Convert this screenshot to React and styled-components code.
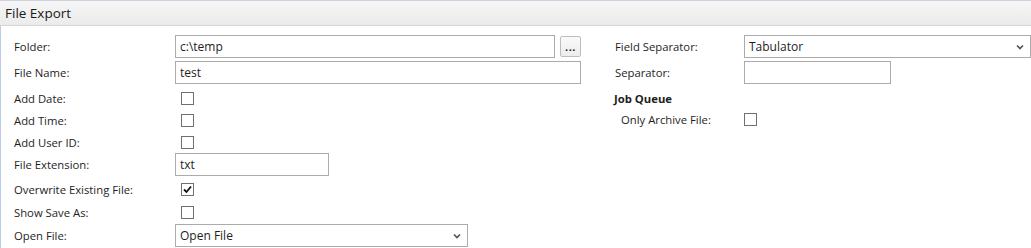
import React from 'react'
import styled, { createGlobalStyle } from 'styled-components'

const Global = createGlobalStyle`
  html, body {
    margin: 0;
    padding: 0;
    background: #fff;
  }
  body {
    font-family: "Open Sans", "Noto Sans", sans-serif;
    font-size: 11.3px;
    color: #1e1e1e;
  }
`

const Panel = styled.div`
  width: 1031px;
  height: 248px;
  overflow: hidden;
  box-sizing: border-box;
`

const Header = styled.div`
  height: 26px;
  box-sizing: border-box;
  border-top: 1px solid #c9d3de;
  border-bottom: 1px solid #d6d6d6;
  background: linear-gradient(#f6f6f6, #ebebeb);
  display: flex;
  align-items: center;
  padding-left: 5px;
  font-size: 13.5px;
  color: #1a1a1a;
`

const Body = styled.div`
  border-left: 1px solid #b9cde6;
  padding: 9px 0 0 13px;
  display: flex;
  height: 222px;
  box-sizing: border-box;
`

const Column = styled.div`
  width: ${p => p.$width}px;
  display: flex;
  flex-direction: column;
`

const Row = styled.div`
  display: flex;
  align-items: center;
  height: ${p => p.$h || 23}px;
  margin-bottom: ${p => p.$mb || 0}px;
  flex-shrink: 0;
`

const Label = styled.div`
  width: ${p => p.$width}px;
  padding-left: ${p => p.$indent || 0}px;
  box-sizing: border-box;
  white-space: nowrap;
`

const Heading = styled.div`
  font-weight: 700;
  margin-left: -1px;
`

const TextBox = styled.div`
  width: ${p => p.$width}px;
  height: 23px;
  box-sizing: border-box;
  border: 1px solid #ababab;
  padding-left: 4px;
  display: flex;
  align-items: center;
  background: #fff;
  font-size: 12px;
`

const Select = styled(TextBox)`
  justify-content: space-between;
  padding-right: 6px;
`

const Chevron = () => (
  <svg width="8" height="6" viewBox="0 0 8 6">
    <path d="M1 1.5 L4 4.5 L7 1.5" fill="none" stroke="#555" strokeWidth="1.7" />
  </svg>
)

const DotsButton = styled.div`
  width: 21px;
  height: 21px;
  margin-left: 5px;
  box-sizing: border-box;
  border: 1px solid #bdbdbd;
  border-radius: 2px;
  background: linear-gradient(#fafafa, #ececec);
  display: flex;
  align-items: flex-end;
  justify-content: center;
  padding-bottom: 4px;
  font-weight: 700;
  font-size: 11px;
  line-height: 1;
  letter-spacing: 0.5px;
`

const Check = styled.div`
  width: 13px;
  height: 13px;
  box-sizing: border-box;
  border: 1px solid #707070;
  margin-left: 6px;
  background: #fff;
  display: flex;
  align-items: center;
  justify-content: center;
`

const CheckBox = ({ checked }) => (
  <Check>
    {checked && (
      <svg width="9" height="9" viewBox="0 0 9 9">
        <path d="M1 4.5 L3.5 7 L8 1.5" fill="none" stroke="#111" strokeWidth="1.8" />
      </svg>
    )}
  </Check>
)

export default function App() {
  return (
    <>
      <Global />
      <Panel>
        <Header>File Export</Header>
        <Body>
          <Column $width={601}>
            <Row $mb={3}>
              <Label $width={161}>Folder:</Label>
              <TextBox $width={380}>c:\temp</TextBox>
              <DotsButton>...</DotsButton>
            </Row>
            <Row $mb={3}>
              <Label $width={161}>File Name:</Label>
              <TextBox $width={406}>test</TextBox>
            </Row>
            <Row $h={22}>
              <Label $width={161}>Add Date:</Label>
              <CheckBox />
            </Row>
            <Row $h={22}>
              <Label $width={161}>Add Time:</Label>
              <CheckBox />
            </Row>
            <Row $h={22}>
              <Label $width={161}>Add User ID:</Label>
              <CheckBox />
            </Row>
            <Row $mb={2}>
              <Label $width={161}>File Extension:</Label>
              <TextBox $width={154}>txt</TextBox>
            </Row>
            <Row>
              <Label $width={161}>Overwrite Existing File:</Label>
              <CheckBox checked />
            </Row>
            <Row>
              <Label $width={161}>Show Save As:</Label>
              <CheckBox />
            </Row>
            <Row>
              <Label $width={161}>Open File:</Label>
              <Select $width={293}>
                <span>Open File</span>
                <Chevron />
              </Select>
            </Row>
          </Column>
          <Column $width={416}>
            <Row $mb={3}>
              <Label $width={129}>Field Separator:</Label>
              <Select $width={287}>
                <span>Tabulator</span>
                <Chevron />
              </Select>
            </Row>
            <Row $mb={3}>
              <Label $width={129}>Separator:</Label>
              <TextBox $width={147} />
            </Row>
            <Row $h={22}>
              <Heading>Job Queue</Heading>
            </Row>
            <Row $h={20}>
              <Label $width={123} $indent={6}>Only Archive File:</Label>
              <CheckBox />
            </Row>
          </Column>
        </Body>
      </Panel>
    </>
  )
}
